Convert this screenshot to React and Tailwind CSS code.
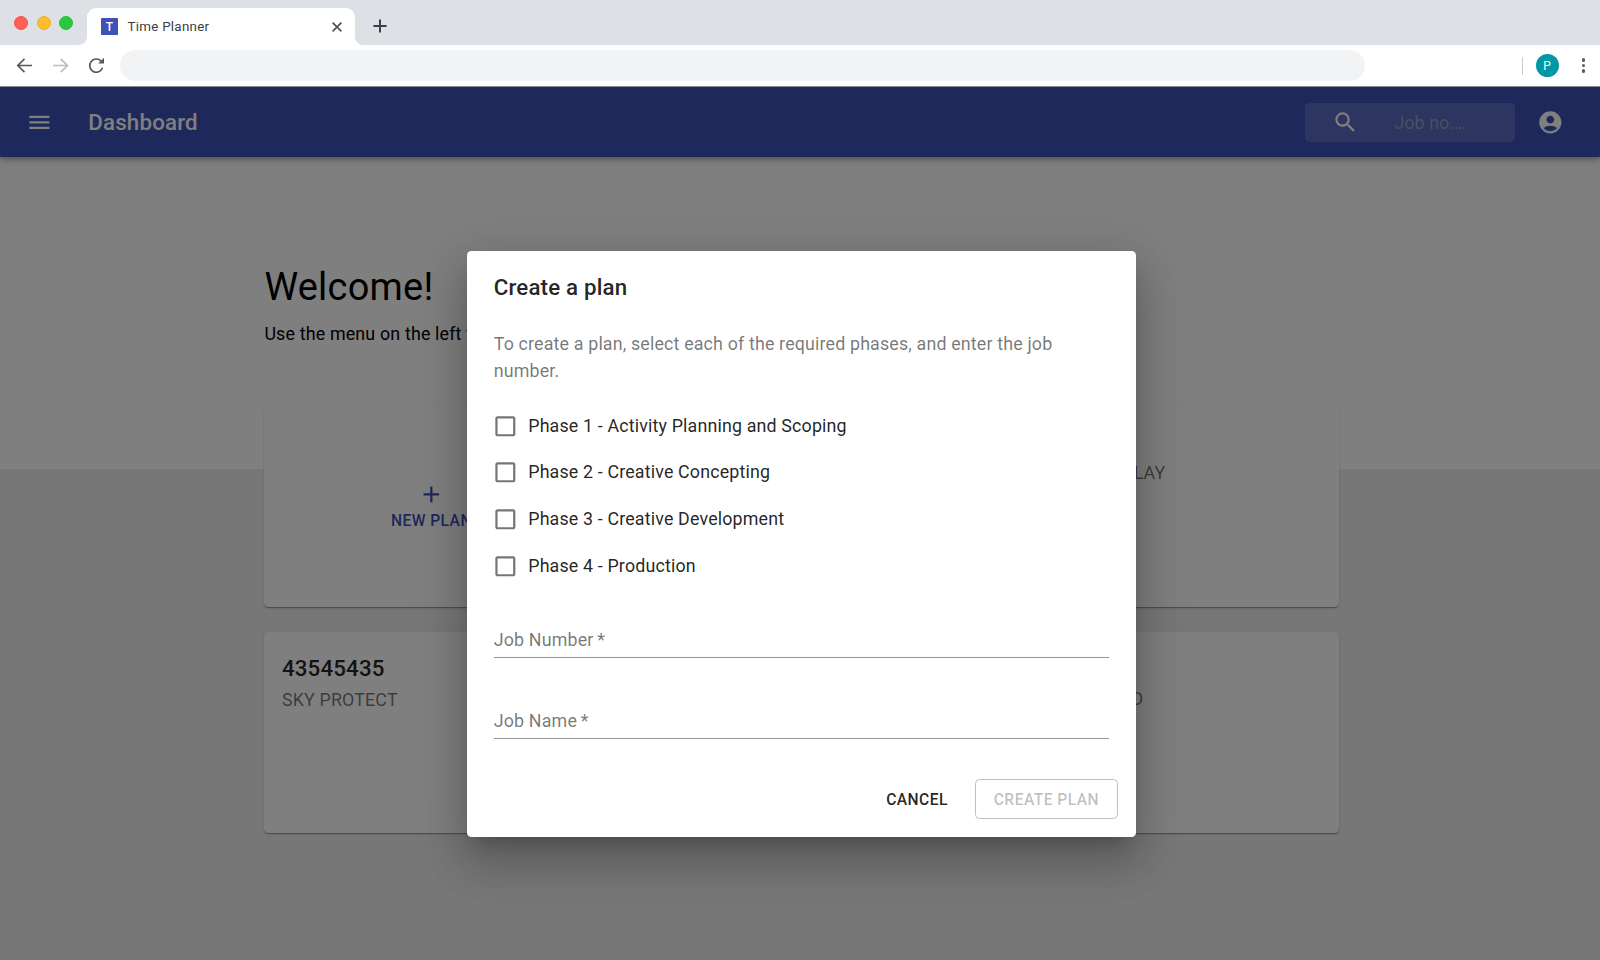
import React from "react";
import { MdMenu, MdSearch, MdAccountCircle, MdAdd, MdCheckBoxOutlineBlank } from "react-icons/md";

const PHASES = [
  "Phase 1 - Activity Planning and Scoping",
  "Phase 2 - Creative Concepting",
  "Phase 3 - Creative Development",
  "Phase 4 - Production",
];

function BrowserChrome() {
  return (
    <header className="flex h-[87px] shrink-0 flex-col border-b border-[#8d8e92] bg-white">
      <div className="flex h-[45px] items-end bg-[#dde0e5]">
        <div className="flex h-[45px] w-[79px] items-center gap-[8.6px] pl-[14px]">
          <span className="size-[14px] shrink-0 rounded-full border border-[#f25048] bg-[#ff5f57]" />
          <span className="size-[14px] shrink-0 rounded-full border border-[#eeae29] bg-[#ffbd2e]" />
          <span className="size-[14px] shrink-0 rounded-full border border-[#22c03b] bg-[#28c940]" />
        </div>
        <svg viewBox="0 0 8 8" className="size-2 text-white" fill="currentColor">
          <path d="M8 0v8H0a8 8 0 0 0 8-8z" />
        </svg>
        <div className="flex h-[37px] w-[268px] items-center rounded-t-[9px] bg-white pr-[12px] pl-[14px]">
          <span className="flex size-[17px] items-center justify-center rounded-[1px] bg-[#3f51b5] text-[12px] font-medium text-white">
            T
          </span>
          <span className="ml-[9.5px] flex-1 pt-[2px] text-[13.4px] tracking-[0.25px] text-[#3c4043]">Time Planner</span>
          <svg viewBox="0 0 12 12" className="size-3" stroke="#4c5054" strokeWidth="1.6" fill="none">
            <path d="M1.6 1.6l8.8 8.8M10.4 1.6L1.6 10.4" />
          </svg>
        </div>
        <svg viewBox="0 0 8 8" className="size-2 text-white" fill="currentColor">
          <path d="M0 0v8h8a8 8 0 0 1-8-8z" />
        </svg>
        <svg viewBox="0 0 14 14" className="mb-[12px] ml-[9.5px] size-[14px]" stroke="#3c4043" strokeWidth="2" fill="none">
          <path d="M7 .4v13.2M.4 7h13.2" />
        </svg>
      </div>
      <div className="flex flex-1 items-center pl-[16px]">
        <svg viewBox="0 0 18 16" className="h-4 w-[18px]" stroke="#55595d" strokeWidth="1.7" fill="none">
          <path d="M16 7.500H2M8.500 .8L1.800 7.500l6.700 6.700" />
        </svg>
        <svg viewBox="0 0 18 16" className="ml-[18px] h-4 w-[18px]" stroke="#babcbe" strokeWidth="1.7" fill="none">
          <path d="M1.200 7.500h14M8.700 .8L15.400 7.500l-6.700 6.700" />
        </svg>
        <svg viewBox="0 0 18 18" className="ml-[17.500px] size-[18px]" fill="none">
          <path d="M14.500 10.800A6.600 6.600 0 1 1 13 4" stroke="#55595d" strokeWidth="1.700" />
          <path d="M16 .8V6.600H10.200z" fill="#55595d" />
        </svg>
        <div className="ml-[14.500px] h-[31px] w-[1245px] rounded-full bg-[#f1f3f4]" />
        <span className="ml-[156.500px] h-[18px] w-px bg-[#c9cbce]" />
        <span className="ml-[13px] flex size-[23px] items-center justify-center rounded-full bg-[#0097a7] text-[12px] text-white">
          P
        </span>
        <span className="ml-[23px] flex flex-col gap-[2.200px]">
          <i className="size-[3.400px] rounded-full bg-[#55595d]" />
          <i className="size-[3.400px] rounded-full bg-[#55595d]" />
          <i className="size-[3.400px] rounded-full bg-[#55595d]" />
        </span>
      </div>
    </header>
  );
}

function AppBar() {
  return (
    <div className="relative z-10 flex h-[70px] shrink-0 items-center bg-[#3f51b5] pl-[26px] text-white shadow-[0_2px_4px_-1px_rgba(0,0,0,.2),0_4px_6px_rgba(0,0,0,.14),0_1px_11px_rgba(0,0,0,.12)]">
      <MdMenu className="size-[26.700px]" />
      <h1 className="ml-[35.500px] flex-1 pt-[2px] text-[22.300px] font-medium tracking-[0.2px]">Dashboard</h1>
      <div className="flex h-[39px] w-[209.500px] items-center rounded-[4.500px] bg-white/15 pl-[26.500px]">
        <MdSearch className="size-[26.700px]" />
        <span className="ml-[36px] pt-[3px] text-[17.830px] tracking-[0.05px] text-[#909fc8]">Job no.…</span>
      </div>
      <MdAccountCircle className="mr-[36px] ml-[22.500px] size-[26.700px]" />
    </div>
  );
}

function Card({ children }) {
  return (
    <div className="h-[201px] rounded-[4.500px] bg-white shadow-[0_2px_1px_-1px_rgba(0,0,0,.2),0_1px_1px_rgba(0,0,0,.14),0_1px_3px_rgba(0,0,0,.12)]">
      {children}
    </div>
  );
}

function Dashboard() {
  return (
    <main className="flex-1 bg-[linear-gradient(#fff_312px,#eeeeee_312px)] pr-[261.500px] pl-[264.400px] pt-[102px]">
      <h2 className="h-[56px] text-[37.900px] leading-[56px] tracking-[0.28px] text-black">Welcome!</h2>
      <p className="mt-[5px] h-[27px] text-[17.830px] leading-[27px] tracking-[0.17px] text-black">
        Use the menu on the left to
      </p>
      <div className="mt-[59.400px] grid grid-cols-3 gap-x-[36px] gap-y-[25px]">
        <Card>
          <div className="flex h-full flex-col items-center justify-center pt-[2px] text-[#3f51b5]">
            <MdAdd className="mr-[1px] size-[26.700px]" />
            <span className="text-[15.600px] leading-[27px] font-medium tracking-[0.45px]">NEW PLAN</span>
          </div>
        </Card>
        <Card />
        <Card>
          <div className="w-[161px] pt-[53px] text-right text-[17.830px] leading-[27px] tracking-[0.17px] text-black/54">
            DISPLAY
          </div>
        </Card>
        <Card>
          <div className="pt-[19px] pl-[17.500px]">
            <div className="text-[22.300px] leading-[35px] font-medium tracking-[0.17px] text-black/87">43545435</div>
            <div className="-mt-[0.500px] text-[17.830px] leading-[27px] tracking-[0.17px] text-black/54">SKY PROTECT</div>
          </div>
        </Card>
        <Card />
        <Card>
          <div className="w-[139px] pt-[53px] text-right text-[17.830px] leading-[27px] tracking-[0.17px] text-black/54">
            BROADBAND
          </div>
        </Card>
      </div>
    </main>
  );
}

function Field({ label }) {
  return (
    <label className="flex h-[36px] items-start border-b border-[#949494] pt-[4px] text-[17.830px] leading-[27px] tracking-[0.17px] text-black/54">
      {label}
    </label>
  );
}

function PlanDialog() {
  return (
    <section className="flex h-[586px] w-[668.500px] flex-col rounded-[4.500px] bg-white px-[26.700px] pt-[18px] shadow-[0_12px_17px_-8px_rgba(0,0,0,.2),0_27px_42px_3px_rgba(0,0,0,.14),0_10px_51px_9px_rgba(0,0,0,.12)]">
      <h3 className="h-[35px] text-[22.300px] leading-[36px] font-medium tracking-[0.17px] text-black/87">Create a plan</h3>
      <p className="mt-[27px] text-[17.830px] leading-[26.750px] tracking-[0.16px] text-black/54">
        To create a plan, select each of the required phases, and enter the job number.
      </p>
      <div className="mt-[18px]">
        {PHASES.map((phase) => (
          <label key={phase} className="flex h-[46.800px] items-center gap-[9.800px]">
            <MdCheckBoxOutlineBlank className="-ml-[2px] size-[26.700px] text-black/54" />
            <span className="text-[17.830px] tracking-[0.16px] text-black/87">{phase}</span>
          </label>
        ))}
      </div>
      <div className="mt-[32.300px] flex flex-col gap-[45.300px]">
        <Field label="Job Number&#8201;*" />
        <Field label="Job Name&#8201;*" />
      </div>
      <div className="-mr-[9px] mt-[40px] flex items-center justify-end gap-[27px] text-[15.600px] font-medium tracking-[0.45px]">
        <button className="pt-[2px] text-black/87">CANCEL</button>
        <button className="h-[40px] w-[143px] rounded-[4.500px] border border-[#c0c0c0] pt-[2px] text-black/26">CREATE PLAN</button>
      </div>
    </section>
  );
}

export default function App() {
  return (
    <div className="flex h-[960px] w-[1600px] flex-col overflow-hidden bg-white font-['Roboto',sans-serif]">
      <BrowserChrome />
      <div className="relative flex min-h-0 flex-1 flex-col overflow-hidden">
        <AppBar />
        <Dashboard />
        <div className="absolute inset-0 z-20 flex items-start justify-center bg-black/50 pt-[164px] pl-[2.600px]">
          <PlanDialog />
        </div>
      </div>
    </div>
  );
}
